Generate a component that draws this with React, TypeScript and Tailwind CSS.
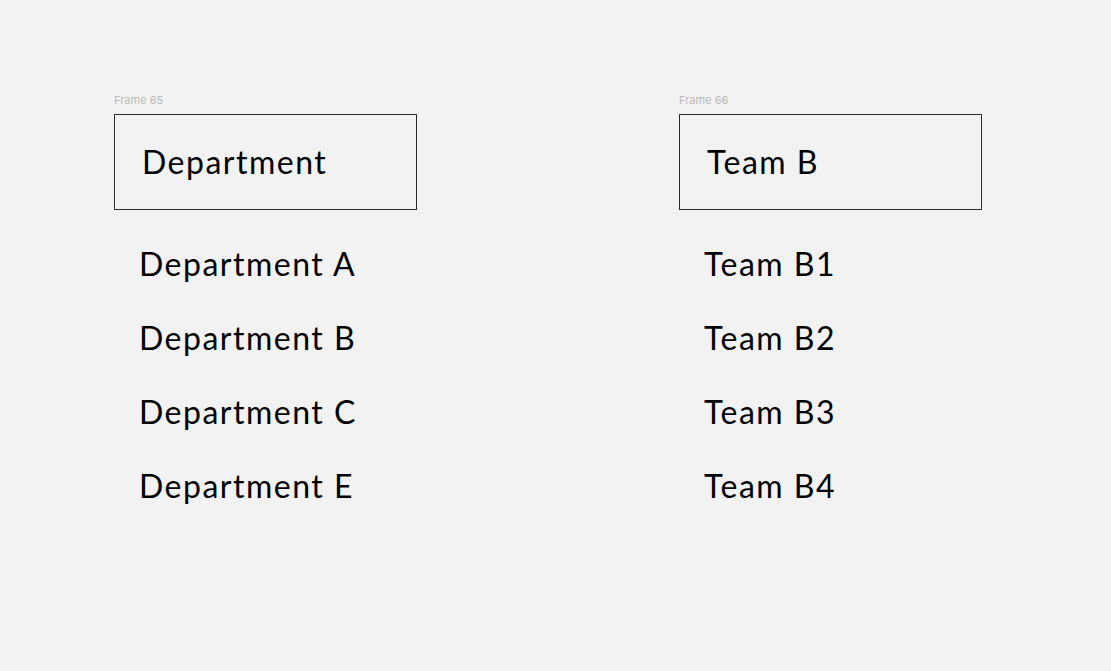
import React from "react";

const frames = [
  { label: "Frame 65", title: "Department", items: ["Department A", "Department B", "Department C", "Department E"] },
  { label: "Frame 66", title: "Team B", items: ["Team B1", "Team B2", "Team B3", "Team B4"] },
];

export default function App() {
  return (
    <div
      className="min-h-[671px] w-full bg-[#f2f2f2] text-black"
      style={{ fontFamily: "Lato, 'Open Sans', sans-serif" }}
    >
      <div className="flex gap-[262px] pl-[114px] pt-[93px]">
        {frames.map((f) => (
          <div key={f.label} className="flex w-[303px] flex-col">
            {/* frame label */}
            <div className="h-[21px] text-[11px] leading-[14px] text-[#b9b9b9]" style={{ fontFamily: "Inter, sans-serif" }}>
              {f.label}
            </div>
            <div className="flex h-[96px] items-center border-[1.5px] border-[#2a2a2a] pl-[27px] text-[32px] tracking-[1.5px]">
              {f.title}
            </div>
            <ul className="mt-[17px] pl-[25px]">
              {f.items.map((it) => (
                <li key={it} className="text-[32px] leading-[74px] tracking-[1.5px]">
                  {it}
                </li>
              ))}
            </ul>
          </div>
        ))}
      </div>
    </div>
  );
}
